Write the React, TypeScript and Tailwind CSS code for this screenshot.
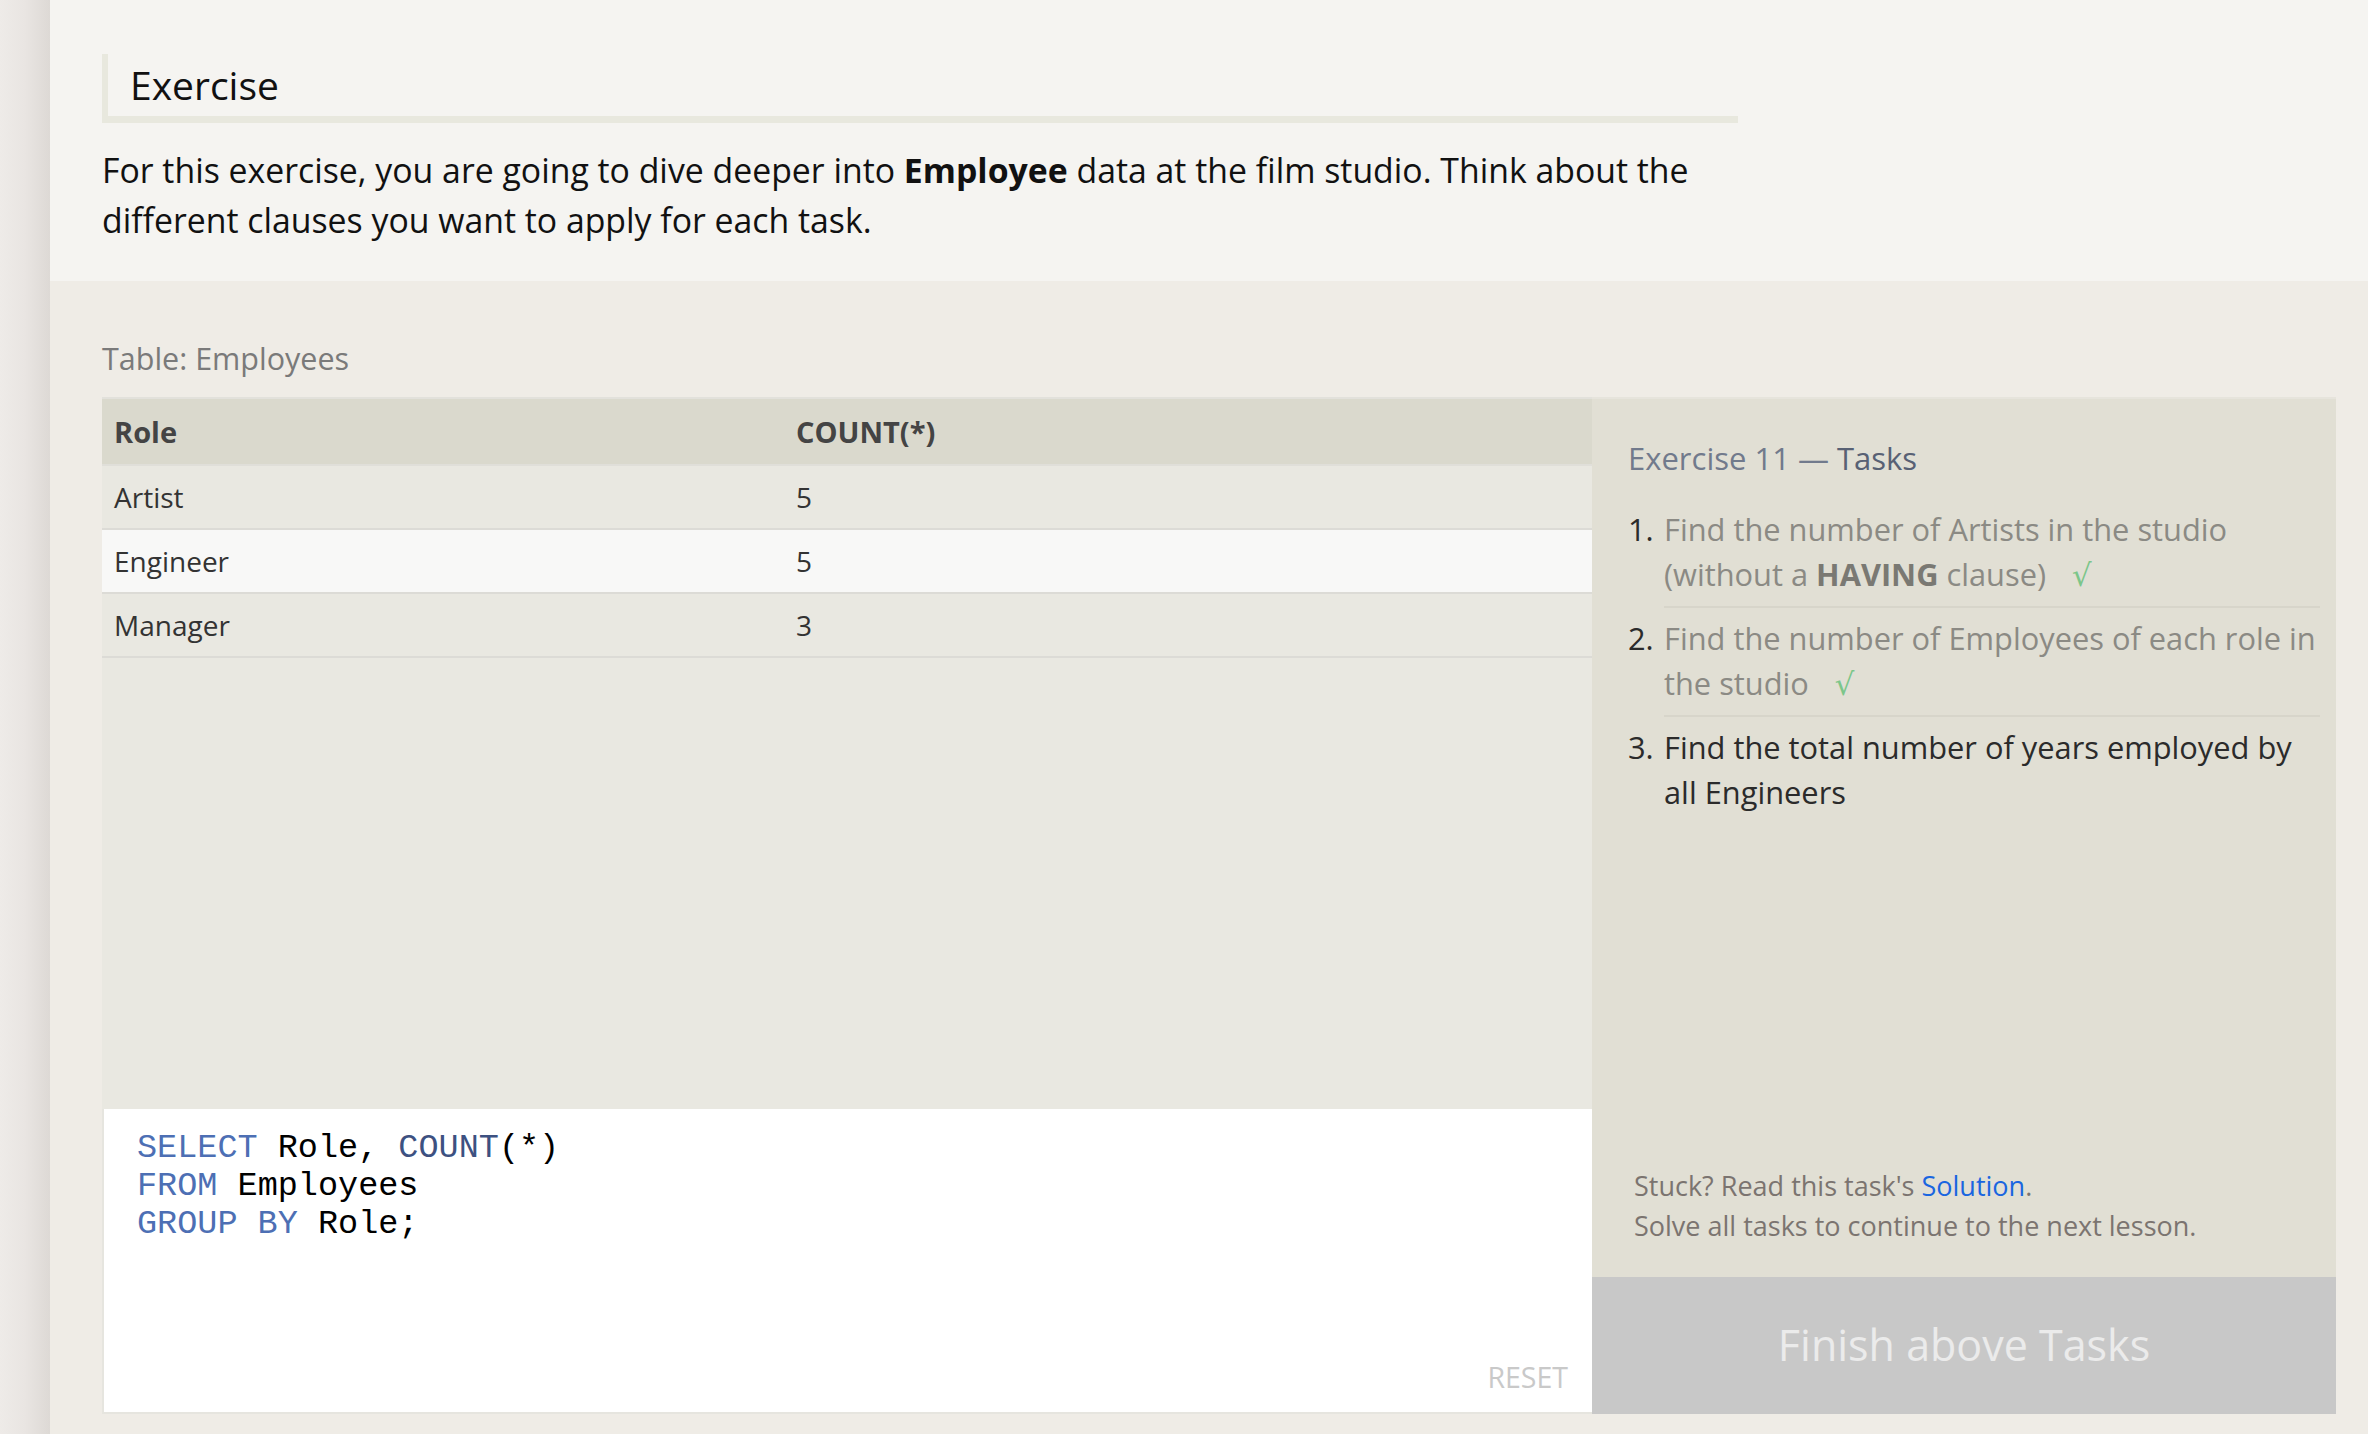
const sans = "font-['Open_Sans',sans-serif]";

const rows = [
  { role: "Artist", count: "5", bg: "bg-[#e9e8e1]" },
  { role: "Engineer", count: "5", bg: "bg-[#f8f8f7]" },
  { role: "Manager", count: "3", bg: "bg-[#e9e8e1]" },
];

function Check() {
  return <span className="ml-[26px] font-['DejaVu_Sans',sans-serif] text-[#7cc68a]">√</span>;
}

export default function App() {
  return (
    <div className={`flex h-[1434px] w-full overflow-hidden bg-[#efece6] ${sans}`}>
      {/* left rail */}
      <div className="w-[50px] shrink-0 bg-gradient-to-r from-[#eeebe8] via-[#e9e5e2] to-[#ddd9d5]" />

      <main className="flex min-w-0 flex-1 flex-col">
        {/* intro */}
        <section className="h-[281px] bg-[#f5f4f1] pl-[52px] pt-[54px]">
          <div className="w-[1636px] border-b-[7px] border-l-[6px] border-[#e8e8de] pl-[22px]">
            <h2 className="text-[39px] leading-[62px] text-[#111]">Exercise</h2>
          </div>
          <p className="mt-[22px] w-[1640px] text-[33.8px] leading-[50px] text-[#111]">
            For this exercise, you are going to dive deeper into <b>Employee</b> data at the film studio. Think about the
            different clauses you want to apply for each task.
          </p>
        </section>

        {/* exercise area */}
        <section className="flex flex-1 flex-col pl-[52px] pr-[32px] pt-[57px]">
          <div className="mb-[19px] text-[30.5px] leading-[40px] text-[#7a7a7a]">Table: Employees</div>

          <div className="flex h-[1017px]">
            {/* left: results + editor */}
            <div className="flex w-[1490px] flex-col">
              <div className="flex-1 border-t-2 border-[#e2e1db] bg-[#e9e8e1]">
                <div className="grid h-[67px] grid-cols-[682px_1fr] items-center border-b-2 border-[#e0dfd9] bg-[#dad9cd] text-[29px] font-bold text-[#444]">
                  <div className="pl-[12px]">Role</div>
                  <div className="pl-[12px]">COUNT(*)</div>
                </div>
                {rows.map((r) => (
                  <div
                    key={r.role}
                    className={`grid h-[64px] grid-cols-[682px_1fr] items-center border-b-2 border-[#dcdbd6] text-[28px] text-[#333] ${r.bg}`}
                  >
                    <div className="pl-[12px]">{r.role}</div>
                    <div className="pl-[12px]">{r.count}</div>
                  </div>
                ))}
              </div>

              <div className="flex h-[305px] flex-col border-b-2 border-l-2 border-[#e6e5df] bg-white pb-[20px] pl-[33px] pr-[24px] pt-[20px]">
                <pre className="font-['Liberation_Mono',monospace] text-[33.5px] leading-[38px] text-black">
                  <span className="text-[#4d6fb4]">SELECT</span> Role, <span className="text-[#3d5181]">COUNT</span>(*){"\n"}
                  <span className="text-[#4d6fb4]">FROM</span> Employees{"\n"}
                  <span className="text-[#4d6fb4]">GROUP BY</span> Role;
                </pre>
                <button className="mt-auto self-end text-[28.5px] leading-[30px] text-[#c9c9c9]">RESET</button>
              </div>
            </div>

            {/* right: tasks */}
            <aside className="flex flex-1 flex-col border-t-2 border-[#e6e4dc] bg-[#e1dfd4]">
              <div className="pl-[36px] pr-[16px] pt-[39px]">
                <h3 className="text-[31px] leading-[40px] text-[#717a8c]">
                  Exercise 11 — <span className="text-[#586174]">Tasks</span>
                </h3>
                <ol className="mt-[29px] text-[30.8px] leading-[45px]">
                  <li className="flex">
                    <span className="w-[36px] shrink-0 text-[#2b2b2b]">1.</span>
                    <div className="flex-1 border-b-2 border-[#d7d5ca] pb-[8px] text-[#8b8a84]">
                      Find the number of Artists in the studio (without a <b className="text-[#7a7973]">HAVING</b> clause)
                      <Check />
                    </div>
                  </li>
                  <li className="flex pt-[8px]">
                    <span className="w-[36px] shrink-0 text-[#2b2b2b]">2.</span>
                    <div className="flex-1 border-b-2 border-[#d7d5ca] pb-[8px] text-[#8b8a84]">
                      Find the number of Employees of each role in the studio
                      <Check />
                    </div>
                  </li>
                  <li className="flex pt-[8px]">
                    <span className="w-[36px] shrink-0 text-[#2b2b2b]">3.</span>
                    <div className="flex-1 text-[#2b2b2b]">Find the total number of years employed by all Engineers</div>
                  </li>
                </ol>
              </div>

              <div className="mb-[31px] mt-auto pl-[42px] text-[27px] leading-[40px] text-[#7b7470]">
                <p>
                  Stuck? Read this task's <a className="text-[#1a66e0]">Solution</a>.
                </p>
                <p>Solve all tasks to continue to the next lesson.</p>
              </div>

              <button className="h-[137px] w-full bg-[#c8c8c8] text-[43px] text-[#ebebeb]">Finish above Tasks</button>
            </aside>
          </div>
        </section>
      </main>
    </div>
  );
}
